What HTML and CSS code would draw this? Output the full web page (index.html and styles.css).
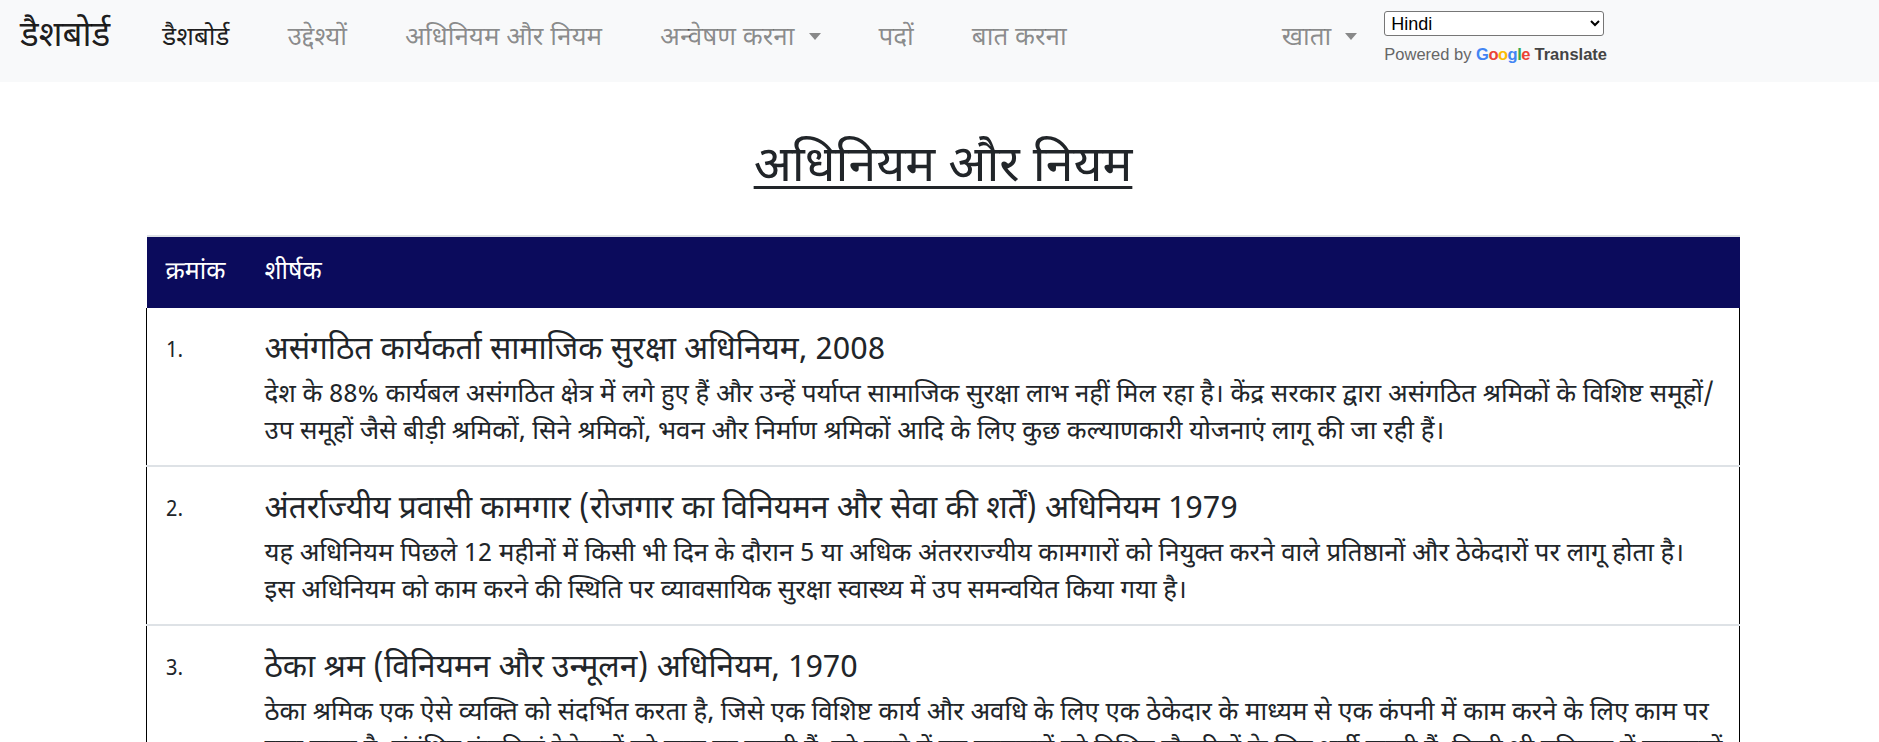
FILE: index.html
```html
<!DOCTYPE html>
<html lang="hi">
<head>
<meta charset="utf-8">
<title>अधिनियम और नियम</title>
<link rel="stylesheet" href="styles.css">
</head>
<body>
<nav class="navbar">
  <a class="brand" href="#">डैशबोर्ड</a>
  <ul class="nav-main">
    <li><a class="nav-link active" href="#">डैशबोर्ड</a></li>
    <li><a class="nav-link" href="#">उद्देश्यों</a></li>
    <li><a class="nav-link" href="#">अधिनियम और नियम</a></li>
    <li><a class="nav-link dropdown" href="#">अन्वेषण करना</a></li>
    <li><a class="nav-link" href="#">पदों</a></li>
    <li><a class="nav-link" href="#">बात करना</a></li>
  </ul>
  <div class="nav-right">
    <a class="nav-link dropdown" href="#">खाता</a>
    <div class="translate">
      <select class="lang-select">
        <option>Hindi</option>
      </select>
      <div class="powered">Powered by <span class="glogo"><span class="g-b">G</span><span class="g-r">o</span><span class="g-y">o</span><span class="g-b">g</span><span class="g-g">l</span><span class="g-r">e</span></span> <b class="tr">Translate</b></div>
    </div>
  </div>
</nav>
<main class="content">
  <h1 class="page-title">अधिनियम और नियम</h1>
  <table class="acts">
    <thead>
      <tr><th class="col-num">क्रमांक</th><th>शीर्षक</th></tr>
    </thead>
    <tbody>
      <tr>
        <td class="col-num">1.</td>
        <td>
          <div class="act-title">असंगठित कार्यकर्ता सामाजिक सुरक्षा अधिनियम, 2008</div>
          <p class="act-desc">देश के 88% कार्यबल असंगठित क्षेत्र में लगे हुए हैं और उन्हें पर्याप्त सामाजिक सुरक्षा लाभ नहीं मिल रहा है। केंद्र सरकार द्वारा असंगठित श्रमिकों के विशिष्ट समूहों/ उप समूहों जैसे बीड़ी श्रमिकों, सिने श्रमिकों, भवन और निर्माण श्रमिकों आदि के लिए कुछ कल्याणकारी योजनाएं लागू की जा रही हैं।</p>
        </td>
      </tr>
      <tr>
        <td class="col-num">2.</td>
        <td>
          <div class="act-title">अंतर्राज्यीय प्रवासी कामगार (रोजगार का विनियमन और सेवा की शर्तें) अधिनियम 1979</div>
          <p class="act-desc">यह अधिनियम पिछले 12 महीनों में किसी भी दिन के दौरान 5 या अधिक अंतरराज्यीय कामगारों को नियुक्त करने वाले प्रतिष्ठानों और ठेकेदारों पर लागू होता है। इस&nbsp;अधिनियम को काम करने की स्थिति पर व्यावसायिक सुरक्षा स्वास्थ्य में उप समन्वयित किया गया है।</p>
        </td>
      </tr>
      <tr>
        <td class="col-num">3.</td>
        <td>
          <div class="act-title">ठेका श्रम (विनियमन और उन्मूलन) अधिनियम, 1970</div>
          <p class="act-desc">ठेका श्रमिक एक ऐसे व्यक्ति को संदर्भित करता है, जिसे एक विशिष्ट कार्य और अवधि के लिए एक ठेकेदार के माध्यम से एक कंपनी में काम करने के लिए काम पर रखा जाता है; संबंधित कंपनियां ठेकेदारों को काम पर रखती हैं, जो बदले में उन कामगारों को विभिन्न नौकरियों के लिए भर्ती करती हैं; किसी भी प्रतिष्ठान में कामगारों के हितों की रक्षा के लिए यह अधिनियम बनाया गया है।</p>
        </td>
      </tr>
    </tbody>
  </table>
</main>
</body>
</html>
```
FILE: styles.css
```css
* { box-sizing: border-box; }
html, body { margin: 0; padding: 0; }
body {
  font-family: "Noto Sans Devanagari", "Noto Sans", "Liberation Sans", sans-serif;
  color: #212529;
  background: #fff;
}
a { text-decoration: none; }

.navbar {
  display: flex;
  align-items: flex-start;
  height: 82px;
  padding: 11px 272px 0 20px;
  background: #f8f9fa;
}
.brand {
  margin-top: 7px;
  font-size: 35px;
  line-height: 40px;
  color: rgba(0,0,0,.9);
  margin-right: 52px;
}
.nav-main {
  display: flex;
  gap: 58px;
  list-style: none;
  margin: 8px 0 0;
  padding: 0;
}
.nav-link {
  font-size: 26px;
  line-height: 40px;
  color: rgba(0,0,0,.45);
}
.nav-link.active { color: rgba(0,0,0,.88); }
.dropdown::after {
  content: "";
  display: inline-block;
  margin-left: 14px;
  vertical-align: 5px;
  border-top: 7px solid currentColor;
  border-left: 6px solid transparent;
  border-right: 6px solid transparent;
}
.nav-right {
  display: flex;
  align-items: flex-start;
  margin-left: auto;
  gap: 27px;
}
.nav-right > .nav-link { margin-top: 8px; }
.translate {
  display: flex;
  flex-direction: column;
  gap: 9px;
}
.lang-select {
  width: 220px;
  height: 25px;
  padding: 0 2px;
  font-family: "Liberation Sans", Arial, sans-serif;
  font-size: 18px;
  border: 1px solid #767676;
  border-radius: 3px;
  background: #fff;
  color: #000;
}
.powered {
  font-family: "Liberation Sans", Arial, sans-serif;
  font-size: 16.5px;
  line-height: 19px;
  color: #666;
}
.glogo { font-weight: bold; letter-spacing: -0.5px; }
.g-b { color: #4285f4; }
.g-r { color: #ea4335; }
.g-y { color: #fbbc05; }
.g-g { color: #34a853; }
.tr { color: #444; }

.content { padding: 57px 139px 0 146px; }
.page-title {
  margin: 0 0 36px;
  text-align: center;
  font-size: 50px;
  line-height: 60px;
  font-weight: 400;
  text-decoration: underline;
  text-decoration-thickness: 3px;
  text-underline-offset: 5px;
}
.acts {
  width: 100%;
  border-collapse: collapse;
}
.acts thead tr {
  background: #0b0b5c;
  color: #fff;
  border-top: 2px solid #dee2e6;
}
.acts th {
  text-align: left;
  font-weight: normal;
  font-size: 25px;
  height: 72px;
  padding: 0 12px;
}
.acts tbody tr {
  border-left: 1px solid #000;
  border-right: 1px solid #000;
  border-bottom: 2px solid #dee2e6;
}
.acts td {
  vertical-align: top;
  padding: 22px 4px 13px 12px;
}
.acts .col-num { width: 106px; padding-left: 19px; }
td.col-num { font-size: 21px; line-height: 44px; }
.act-title {
  font-size: 31.6px;
  line-height: 44px;
}
.act-desc {
  margin: 4px 0 0;
  font-size: 25.8px;
  line-height: 37px;
}
```
